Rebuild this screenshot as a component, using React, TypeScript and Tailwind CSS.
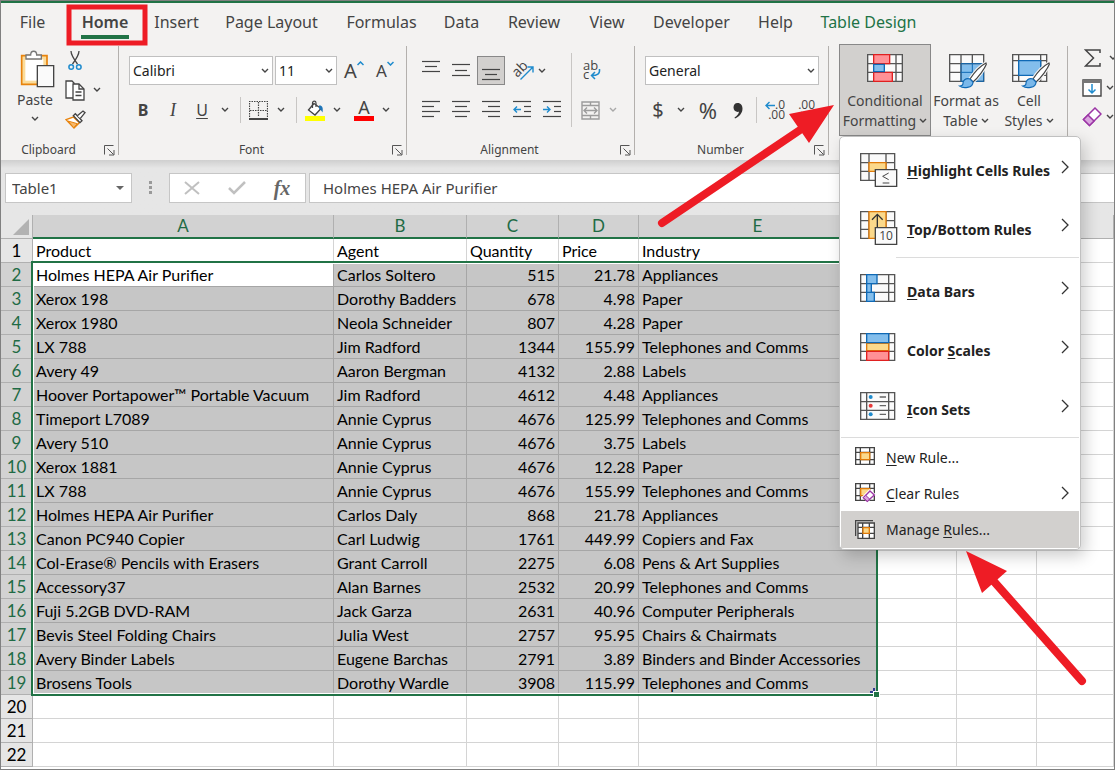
import type {ReactNode} from 'react'

const tabs = [
  {name: 'File', width: 'w-[63px]'},
  {name: 'Home', width: 'w-[82px]'},
  {name: 'Insert', width: 'w-[61px]'},
  {name: 'Page Layout', width: 'w-[129px]'},
  {name: 'Formulas', width: 'w-[91px]'},
  {name: 'Data', width: 'w-[69px]'},
  {name: 'Review', width: 'w-[76px]'},
  {name: 'View', width: 'w-[70px]'},
  {name: 'Developer', width: 'w-[99px]'},
  {name: 'Help', width: 'w-[69px]'},
  {name: 'Table Design', width: 'w-[117px]'},
]

const columns = ['A', 'B', 'C', 'D', 'E', 'F', 'G', 'H']

const rows = [
  ['Product', 'Agent', 'Quantity', 'Price', 'Industry'],
  ['Holmes HEPA Air Purifier', 'Carlos Soltero', '515', '21.78', 'Appliances'],
  ['Xerox 198', 'Dorothy Badders', '678', '4.98', 'Paper'],
  ['Xerox 1980', 'Neola Schneider', '807', '4.28', 'Paper'],
  ['LX 788', 'Jim Radford', '1344', '155.99', 'Telephones and Comms'],
  ['Avery 49', 'Aaron Bergman', '4132', '2.88', 'Labels'],
  ['Hoover Portapower™ Portable Vacuum', 'Jim Radford', '4612', '4.48', 'Appliances'],
  ['Timeport L7089', 'Annie Cyprus', '4676', '125.99', 'Telephones and Comms'],
  ['Avery 510', 'Annie Cyprus', '4676', '3.75', 'Labels'],
  ['Xerox 1881', 'Annie Cyprus', '4676', '12.28', 'Paper'],
  ['LX 788', 'Annie Cyprus', '4676', '155.99', 'Telephones and Comms'],
  ['Holmes HEPA Air Purifier', 'Carlos Daly', '868', '21.78', 'Appliances'],
  ['Canon PC940 Copier', 'Carl Ludwig', '1761', '449.99', 'Copiers and Fax'],
  ['Col-Erase® Pencils with Erasers', 'Grant Carroll', '2275', '6.08', 'Pens & Art Supplies'],
  ['Accessory37', 'Alan Barnes', '2532', '20.99', 'Telephones and Comms'],
  ['Fuji 5.2GB DVD-RAM', 'Jack Garza', '2631', '40.96', 'Computer Peripherals'],
  ['Bevis Steel Folding Chairs', 'Julia West', '2757', '95.95', 'Chairs & Chairmats'],
  ['Avery Binder Labels', 'Eugene Barchas', '2791', '3.89', 'Binders and Binder Accessories'],
  ['Brosens Tools', 'Dorothy Wardle', '3908', '115.99', 'Telephones and Comms'],
  [],
  [],
  [],
]

function Chevron({className = 'text-[#444]'}: {className?: string}) {
  return (
    <svg width="8" height="6" viewBox="0 0 8 6" className={`shrink-0 ${className}`} fill="none">
      <path d="M1 1l3 3 3-3" stroke="currentColor" strokeWidth="1.4" />
    </svg>
  )
}

function Tool({
  label,
  className,
  children,
}: {
  label: string
  className: string
  children: ReactNode
}) {
  return (
    <button
      type="button"
      aria-label={label}
      className={`flex h-full shrink-0 items-center justify-center ${className}`}
    >
      {children}
    </button>
  )
}

function Combo({label, value, className}: {label: string; value: string; className: string}) {
  return (
    <div className={`relative h-[29px] shrink-0 ${className}`}>
      <select
        aria-label={label}
        className="h-full w-full appearance-none border border-[#c0c0c0] bg-white pl-[3px] text-[14px] text-[#222]"
      >
        <option>{value}</option>
      </select>
      <span className="pointer-events-none absolute top-[12px] right-[4px]">
        <Chevron />
      </span>
    </div>
  )
}

function Divider({className}: {className: string}) {
  return <div className={`w-px shrink-0 bg-[#c8c6c4] ${className}`} />
}

function GroupDivider() {
  return <div className="mt-[2px] h-[109px] w-px shrink-0 bg-[#b3b0ad]" />
}

function Group({
  name,
  className,
  children,
}: {
  name: string
  className: string
  children: ReactNode
}) {
  return (
    <section className={`flex shrink-0 flex-col ${className}`}>
      {children}
      <footer className="mt-auto flex h-[20px] items-center pr-[3px]">
        <span className="flex-1 pr-[8px] text-center text-[12px] leading-[20px] text-[#444]">
          {name}
        </span>
        <button type="button" aria-label={`${name} settings`}>
          <svg width="11" height="11" viewBox="0 0 11 11" fill="none" stroke="#555">
            <path d="M.5 9.500V.5H9.500M3.500 3.500l6 6M10 5v5H5" />
          </svg>
        </button>
      </footer>
    </section>
  )
}

function Lines({lines, blueArrow}: {lines: number[][]; blueArrow?: 'left' | 'right'}) {
  return (
    <svg width="18" height="28" viewBox="0 0 18 28" fill="none">
      {lines.map(([x1, x2, y]) => (
        <path key={y} d={`M${x1} ${y}.5H${x2}`} stroke="#444" strokeWidth="1.2" />
      ))}
      {blueArrow === 'left' && (
        <path d="M8 13.500H1M4 10.500l-3 3 3 3" stroke="#1e8bcd" strokeWidth="1.4" />
      )}
      {blueArrow === 'right' && (
        <path d="M0 13.500h7M4 10.500l3 3-3 3" stroke="#1e8bcd" strokeWidth="1.4" />
      )}
    </svg>
  )
}

function PasteIcon() {
  return (
    <svg width="35" height="38" viewBox="0 0 105 114" fill="none">
      <path d="M5 17h76v86H5z" fill="#fbdc9b" stroke="#e8830c" strokeWidth="5" />
      <path d="M16 28h54v64H16z" fill="#fff" />
      <path
        d="M18 27V15h14C32 0 50 0 50 15h14v12z"
        fill="#fff"
        stroke="#777"
        strokeWidth="4"
      />
      <path d="M52 47h49v63H52z" fill="#fafafa" stroke="#444" strokeWidth="4" />
    </svg>
  )
}

function CutIcon() {
  return (
    <svg width="14" height="20" viewBox="0 0 14 20" fill="none">
      <path d="M3 0c0 4 2 7 6.500 13M11 0c0 4-2 7-6.500 13" stroke="#444" strokeWidth="1.3" />
      <circle cx="3.200" cy="16" r="2.300" stroke="#1e8bcd" strokeWidth="1.500" />
      <circle cx="10.800" cy="16" r="2.300" stroke="#1e8bcd" strokeWidth="1.500" />
    </svg>
  )
}

function CopyIcon() {
  return (
    <svg width="21" height="21" viewBox="0 0 21 21" fill="#fff" stroke="#444" strokeWidth="1.3">
      <path d="M1 1h6l2 2v15H1z" />
      <path d="M8 4h6l5 5v11H8z" />
      <path d="M14 4v5h5M10.500 12h6M10.500 15.500h6" fill="none" />
    </svg>
  )
}

function PainterIcon() {
  return (
    <svg width="21" height="19" viewBox="0 0 63 57" fill="none" strokeWidth="4">
      <path d="M3 29l22-8 18 17-16 16z" fill="#fff" stroke="#e8830c" />
      <path d="M9 33l28 8-11 12z" fill="#f7b96b" stroke="#e8830c" strokeWidth="3" />
      <path d="M25 17l6-6 20 21-6 6z" fill="#fff" stroke="#444" />
      <path d="M37 17L54 3l6 5-14 17" fill="#fff" stroke="#444" />
    </svg>
  )
}

function BordersIcon() {
  return (
    <svg width="19" height="19" viewBox="0 0 19 19" fill="none" stroke="#444">
      <path
        d="M.5 16V.5h18V16M9.500 1v15M1 9.500h17"
        strokeDasharray="1.500 1"
        strokeWidth="1.2"
      />
      <path d="M0 18h19" strokeWidth="2" />
    </svg>
  )
}

function FillIcon() {
  return (
    <svg width="20" height="21" viewBox="0 0 20 21" fill="none">
      <path d="M9 3.500l7 5-6 6.500-6.500-5z" fill="#fff" stroke="#444" strokeWidth="1.300" />
      <path d="M7.500 8V3c0-2.500 3.500-2.500 3.500 0v4" stroke="#444" strokeWidth="1.200" />
      <path d="M14 5.500c3-.5 4.500 2 3.500 7-1-2-2-3-3.500-4z" fill="#1e75b8" />
      <path d="M0 16h20v5H0z" fill="#ff0" />
    </svg>
  )
}

function OrientationIcon() {
  return (
    <svg width="20" height="20" viewBox="0 0 20 20" fill="none" className="overflow-visible">
      <text
        x="1"
        y="15"
        fontSize="14"
        fontFamily="Open Sans, sans-serif"
        fill="#444"
        transform="rotate(-45 5 12)"
      >
        ab
      </text>
      <path d="M7.500 18.500L20 6M14.500 6H20v5.500" stroke="#1e8bcd" strokeWidth="1.400" />
    </svg>
  )
}

function WrapIcon() {
  return (
    <svg width="18" height="21" viewBox="0 0 18 21" fill="none" className="overflow-visible">
      <text x="0" y="10" fontSize="13" fontFamily="Open Sans, sans-serif" fill="#444">
        ab
        <tspan x="0" y="19">
          c
        </tspan>
      </text>
      <path
        d="M16.500 9c.5 5-2 6.500-8 6.500M12 12l-3.500 3.500L12 19"
        stroke="#1e8bcd"
        strokeWidth="1.500"
      />
    </svg>
  )
}

function MergeIcon() {
  return (
    <svg width="19" height="19" viewBox="0 0 19 19" fill="none" stroke="#9c9c9c" strokeWidth="1.400">
      <path d="M1 1h17v17H1zM1 4.500h17M1 14.500h17M9.500 1v3.500M9.500 14.500V18" />
      <path d="M3 9.500h13M6 6.500l-3 3 3 3M13 6.500l3 3-3 3" />
    </svg>
  )
}

function DecimalIcon({top, bottom, left}: {top: string; bottom: string; left?: boolean}) {
  return (
    <svg width="20" height="20" viewBox="0 0 20 20" fill="none" className="overflow-visible">
      <g fontSize="12" fontFamily="Open Sans, sans-serif" textAnchor="end" fill="#444">
        <text x="20" y="9">
          {top}
        </text>
        <text x="20" y="19">
          {bottom}
        </text>
      </g>
      {left ? (
        <path d="M10 5.500H1M4.500 2L1 5.500 4.500 9" stroke="#1e8bcd" strokeWidth="1.400" />
      ) : (
        <path d="M1 15h8M6 12l3 3-3 3" stroke="#1e8bcd" strokeWidth="1.400" />
      )}
    </svg>
  )
}

function Brush() {
  return (
    <>
      <path
        d="M111 27C94 36 74 58 63 75l9 9C88 70 107 44 112 31z"
        fill="#fff"
        stroke="#f3f2f1"
        strokeWidth="10"
      />
      <path
        d="M111 27C94 36 74 58 63 75l9 9C88 70 107 44 112 31z"
        fill="#fff"
        stroke="#444"
        strokeWidth="3.500"
      />
      <path
        d="M63 75c-14-4-22 6-21 13 0 6-5 8-10 8 10 8 40 7 40-12z"
        fill="#7ab8ea"
        stroke="#0f69b5"
        strokeWidth="3.500"
      />
    </>
  )
}

function ConditionalIcon() {
  return (
    <svg width="36" height="28" viewBox="0 0 108 84" fill="none" strokeWidth="4">
      <path
        d="M2 2h104v80H2zM2 29h104M2 55h104M20 2v80M87 2v80"
        fill="#fafafa"
        stroke="#555"
      />
      <path d="M20 2h48v27H20zM20 55h56v27H20z" fill="#ff9196" stroke="#e02020" />
      <path d="M20 31h32v22H20z" fill="#83beec" stroke="#0f69b5" />
    </svg>
  )
}

function FormatTableIcon() {
  return (
    <svg width="38" height="35" viewBox="0 0 114 105" fill="none" strokeWidth="4">
      <path d="M2 2h102v80H2z" fill="#fafafa" />
      <path d="M36 29h68v53H36z" fill="#83beec" />
      <path d="M2 2h102v80H2zM2 29h102M2 55h34M36 2v80M70 2v27" stroke="#555" />
      <path d="M36 29h68v53H36zM36 55h68M70 29v53" stroke="#0f69b5" strokeWidth="3" />
      <Brush />
    </svg>
  )
}

function CellStylesIcon() {
  return (
    <svg width="38" height="35" viewBox="0 0 114 105" fill="none" strokeWidth="4">
      <path d="M2 2h102v80H2zM2 20h102M2 64h102M20 2v80M86 2v80" fill="#fafafa" stroke="#555" />
      <path d="M20 20h66v44H20z" fill="#83beec" stroke="#0f69b5" />
      <Brush />
    </svg>
  )
}

function EraserIcon() {
  return (
    <svg width="20" height="20" viewBox="0 0 20 20" fill="none" stroke="#9b35a5" strokeWidth="1.500">
      <path d="M13 1l6 6L7.500 18.500l-6-6z" fill="#fff" />
      <path d="M6 8l6 6-4.500 4.500-6-6z" fill="#d9a5de" />
    </svg>
  )
}

// Base 35x28 sheet that the large menu icons are drawn on
function Sheet({grid, children}: {grid: string; children: ReactNode}) {
  return (
    <svg width="38" height="36" viewBox="0 0 114 108" fill="none" strokeWidth="4">
      <path d="M2 2h102v80H2z" fill="#fafafa" stroke="#555" />
      <path d={grid} stroke="#555" strokeWidth="4" />
      {children}
    </svg>
  )
}

const wideGrid = 'M2 29h102M2 55h102M27 2v80M78 2v80'
const narrowGrid = 'M2 29h102M2 55h102M20 2v80M86 2v80'

const bigItems = [
  {
    label: ['', 'H', 'ighlight Cells Rules'],
    icon: (
      <Sheet grid={wideGrid}>
        <path d="M27 29h51v26H27z" fill="#fbd98b" stroke="#e07b0a" />
        <path d="M46 50h64v50H46z" fill="#fafafa" stroke="#444" />
        <path d="M86 60L68 70l18 10M68 90h20" stroke="#444" strokeWidth="3" />
      </Sheet>
    ),
  },
  {
    label: ['', 'T', 'op/Bottom Rules'],
    icon: (
      <Sheet grid={wideGrid}>
        <path d="M27 2h51v80H27z" fill="#fbd98b" stroke="#e07b0a" />
        <path d="M52 50V12M36 26l16-16 16 16" stroke="#333" strokeWidth="4" />
        <path d="M46 50h64v50H46z" fill="#fafafa" stroke="#444" />
        <text
          x="78"
          y="88"
          fontSize="36"
          fontWeight="400"
          fontFamily="Open Sans, sans-serif"
          textAnchor="middle"
          fill="#444"
        >
          10
        </text>
      </Sheet>
    ),
  },
  {
    label: ['', 'D', 'ata Bars'],
    icon: (
      <Sheet grid={narrowGrid}>
        <path d="M20 2h31v27H20zM20 29h14v26H20zM20 55h23v27H20z" fill="#83beec" stroke="#0f69b5" />
      </Sheet>
    ),
  },
  {
    label: ['Color ', 'S', 'cales'],
    icon: (
      <Sheet grid={narrowGrid}>
        <path d="M20 31h66v22H20z" fill="#fbd98b" stroke="#e07b0a" />
        <path d="M20 2h66v27H20z" fill="#83beec" stroke="#0f69b5" />
        <path d="M20 55h66v27H20z" fill="#ff9196" stroke="#e02020" />
      </Sheet>
    ),
  },
  {
    label: ['', 'I', 'con Sets'],
    icon: (
      <Sheet grid={narrowGrid}>
        <circle cx="32" cy="15" r="6" fill="#1e8bcd" />
        <circle cx="32" cy="41" r="6" fill="#e83a3a" />
        <circle cx="32" cy="67" r="6" fill="#1e8bcd" />
        <path d="M59 15h19M59 41h19M59 67h19" stroke="#666" />
      </Sheet>
    ),
  },
]

function SmallSheet() {
  return (
    <>
      <path d="M2 2h56v50H2zM2 16h56M2 38h56M16 2v50M44 2v50" fill="#fff" stroke="#444" strokeWidth="4" />
      <path d="M17 17h27v21H17z" fill="#fbd98b" stroke="#e07b0a" strokeWidth="4" />
    </>
  )
}

const smallItems = [
  {
    label: ['', 'N', 'ew Rule...'],
    icon: <SmallSheet />,
  },
  {
    label: ['', 'C', 'lear Rules'],
    icon: (
      <>
        <SmallSheet />
        <path d="M44 18l18 16-24 24-18-16z" fill="#fff" />
        <path d="M45 24l13 12-21 19-12-11z" fill="#fff" stroke="#9b35a5" strokeWidth="4" />
        <path d="M32 37l12 11-7 7-12-11z" fill="#d9a5de" stroke="#9b35a5" strokeWidth="3" />
      </>
    ),
  },
  {
    label: ['Manage ', 'R', 'ules...'],
    icon: (
      <>
        <path d="M2 48V2h52" stroke="#444" strokeWidth="4" />
        <path d="M5 48V5h49" stroke="#aaa" strokeWidth="3" />
        <path d="M9 9h49v46H9zM9 22h49M9 40h49M23 9v46M43 9v46" fill="#fff" stroke="#444" strokeWidth="4" />
        <path d="M24 23h19v17H24z" fill="#fbd98b" stroke="#e07b0a" strokeWidth="4" />
      </>
    ),
  },
]

function MenuLabel({parts}: {parts: string[]}) {
  return (
    <span className="flex-1 text-left whitespace-pre">
      {parts[0]}
      <span className="underline underline-offset-2">{parts[1]}</span>
      {parts[2]}
    </span>
  )
}

function SubmenuArrow() {
  return (
    <svg width="8" height="14" viewBox="0 0 8 14" fill="none">
      <path d="M1 1l6 6-6 6" stroke="#333" strokeWidth="1.300" />
    </svg>
  )
}

function RulesMenu() {
  return (
    <div
      role="menu"
      className="absolute top-[92px] left-0 z-10 w-[242px] rounded-[5px] border border-[#c0c0c0] bg-white px-px pt-[3px] pb-px text-[#222] shadow-[4px_6px_16px_rgba(0,0,0,0.2)]"
    >
      {bigItems.map(({label, icon}, i) => (
        <div key={label[1]}>
          <button
            type="button"
            role="menuitem"
            className={`flex w-full items-center pr-[10px] pl-[19px] text-[14px] font-bold ${
              i === 1 ? 'h-[58px]' : 'h-[59px]'
            }`}
          >
            <span className="w-[47px] pt-[2px]">{icon}</span>
            <span className="flex flex-1 pt-[2px]">
              <MenuLabel parts={label} />
            </span>
            <span className="pb-[6px]">
              <SubmenuArrow />
            </span>
          </button>
          {i === 1 && <hr className="mb-[3px] ml-[55px] border-[#dcdcdc]" />}
        </div>
      ))}
      <hr className="mt-[-1px] mb-px border-[#dcdcdc]" />
      {smallItems.map(({label, icon}, i) => (
        <button
          key={label[1]}
          type="button"
          role="menuitem"
          className={`flex w-full items-center pr-[10px] pl-[14px] text-[14px] ${
            i === 2 ? 'h-[37px] bg-[#d2d0ce]' : 'h-[36px]'
          }`}
        >
          <span className="w-[31px]">
            <svg width="21" height="20" viewBox="0 0 63 60" fill="none">
              {icon}
            </svg>
          </span>
          <MenuLabel parts={label} />
          {i === 1 && <SubmenuArrow />}
        </button>
      ))}
    </div>
  )
}

function LargeButton({
  icon,
  lines,
  className,
}: {
  icon: ReactNode
  lines: [string, string]
  className: string
}) {
  return (
    <button
      type="button"
      className={`flex h-[92px] shrink-0 flex-col items-center border text-[14px] leading-[20px] whitespace-nowrap text-[#444] ${className}`}
    >
      <span className="h-[46px] pt-[9px]">{icon}</span>
      <span>{lines[0]}</span>
      <span className="flex items-center gap-[3px]">
        {lines[1]}
        <Chevron />
      </span>
    </button>
  )
}

function Ribbon() {
  return (
    <div className="flex h-[116px] shrink-0">
      <Group name="Clipboard" className="w-[117px]">
        <div className="flex pl-[14px]">
          <button
            type="button"
            className="flex w-[40px] flex-col items-center pt-[6px] text-[14px] text-[#444]"
          >
            <span className="pl-[5px]">
              <PasteIcon />
            </span>
            <span className="mt-[2px] mb-[6px] leading-[20px]">Paste</span>
            <Chevron />
          </button>
          <div className="flex flex-col pt-[3px] pl-[5px]">
            <div className="h-[28px]">
              <Tool label="Cut" className="w-[30px]">
                <CutIcon />
              </Tool>
            </div>
            <div className="flex h-[30px]">
              <Tool label="Copy" className="w-[30px]">
                <CopyIcon />
              </Tool>
              <Tool label="Copy options" className="w-[14px]">
                <Chevron />
              </Tool>
            </div>
            <div className="h-[28px]">
              <Tool label="Format Painter" className="w-[30px]">
                <PainterIcon />
              </Tool>
            </div>
          </div>
        </div>
      </Group>
      <GroupDivider />

      <Group name="Font" className="w-[287px]">
        <div className="mt-[12px] flex h-[29px] pl-[10px]">
          <Combo label="Font name" value="Calibri" className="mr-[2px] w-[144px]" />
          <Combo label="Font size" value="11" className="w-[62px]" />
          <Tool label="Grow font" className="w-[34px] text-[20px] text-[#444]">
            A
            <svg width="7" height="5" viewBox="0 0 7 5" fill="none" className="mb-[14px]">
              <path d="M.5 4l3-3 3 3" stroke="#1e8bcd" strokeWidth="1.500" />
            </svg>
          </Tool>
          <Tool label="Shrink font" className="w-[28px] text-[17px] text-[#444]">
            A
            <svg width="7" height="5" viewBox="0 0 7 5" fill="none" className="mb-[14px]">
              <path d="M.5 1l3 3 3-3" stroke="#1e8bcd" strokeWidth="1.500" />
            </svg>
          </Tool>
        </div>
        <div className="mt-[12px] flex h-[26px] items-center pl-[9px] text-[16px] text-[#444]">
          <Tool label="Bold" className="w-[30px] font-bold">
            B
          </Tool>
          <Tool label="Italic" className="w-[30px] font-['Liberation_Serif',serif] text-[18px] italic">
            I
          </Tool>
          <Tool label="Underline" className="w-[28px] underline underline-offset-2">
            U
          </Tool>
          <Tool label="Underline options" className="w-[18px]">
            <Chevron />
          </Tool>
          <Divider className="ml-[6px] h-[26px]" />
          <Tool label="Borders" className="w-[34px]">
            <BordersIcon />
          </Tool>
          <Tool label="Border options" className="w-[12px]">
            <Chevron />
          </Tool>
          <Divider className="ml-[9px] h-[26px]" />
          <Tool label="Fill color" className="ml-[6px] w-[24px]">
            <FillIcon />
          </Tool>
          <Tool label="Fill options" className="w-[20px]">
            <Chevron />
          </Tool>
          <Tool label="Font color" className="ml-[3px] w-[28px]">
            <span className="w-[20px] border-b-5 border-[#f00] text-[18px] leading-[17px]">A</span>
          </Tool>
          <Tool label="Font color options" className="w-[16px]">
            <Chevron />
          </Tool>
        </div>
      </Group>
      <GroupDivider />

      <Group name="Alignment" className="w-[227px]">
        <div className="flex pl-[9px]">
          <div className="w-[155px] pt-[12px]">
            <div className="flex h-[29px]">
              <Tool label="Top align" className="w-[30px]">
                <Lines lines={[[0, 18, 4], [3, 15, 9], [0, 18, 14]]} />
              </Tool>
              <Tool label="Middle align" className="w-[30px]">
                <Lines lines={[[0, 18, 7], [3, 15, 13], [0, 18, 18]]} />
              </Tool>
              <Tool
                label="Bottom align"
                className="mx-px w-[28px] border border-[#888] bg-[#d2d0ce]"
              >
                <Lines lines={[[0, 18, 12], [3, 15, 17], [0, 18, 22]]} />
              </Tool>
              <Tool label="Orientation" className="w-[34px]">
                <OrientationIcon />
              </Tool>
              <Tool label="Orientation options" className="w-[4px]">
                <Chevron />
              </Tool>
            </div>
            <div className="mt-[12px] flex h-[26px]">
              <Tool label="Align left" className="w-[30px]">
                <Lines lines={[[0, 18, 5], [0, 12, 10], [0, 18, 15], [0, 12, 20]]} />
              </Tool>
              <Tool label="Center" className="w-[30px]">
                <Lines lines={[[0, 18, 5], [3, 15, 10], [0, 18, 15], [3, 15, 20]]} />
              </Tool>
              <Tool label="Align right" className="w-[30px]">
                <Lines lines={[[0, 18, 5], [6, 18, 10], [0, 18, 15], [6, 18, 20]]} />
              </Tool>
              <Tool label="Decrease indent" className="w-[31px]">
                <Lines
                  lines={[[0, 18, 5], [11, 18, 10], [11, 18, 15], [0, 18, 20]]}
                  blueArrow="left"
                />
              </Tool>
              <Tool label="Increase indent" className="w-[30px]">
                <Lines
                  lines={[[0, 18, 5], [11, 18, 10], [11, 18, 15], [0, 18, 20]]}
                  blueArrow="right"
                />
              </Tool>
            </div>
          </div>
          <Divider className="mt-[9px] h-[74px]" />
          <div className="pt-[12px]">
            <div className="flex h-[29px]">
              <Tool label="Wrap text" className="w-[40px]">
                <WrapIcon />
              </Tool>
            </div>
            <div className="mt-[12px] flex h-[26px]">
              <Tool label="Merge and center" className="w-[36px]">
                <MergeIcon />
              </Tool>
              <Tool label="Merge options" className="w-[10px]">
                <Chevron className="text-[#a8a8a8]" />
              </Tool>
            </div>
          </div>
        </div>
      </Group>
      <GroupDivider />

      <Group name="Number" className="w-[193px]">
        <div className="mt-[12px] h-[29px] pl-[10px]">
          <Combo label="Number format" value="General" className="w-[174px]" />
        </div>
        <div className="mt-[12px] flex h-[26px] items-center pl-[8px] text-[20px] text-[#444]">
          <Tool label="Currency" className="w-[30px]">
            $
          </Tool>
          <Tool label="Currency options" className="w-[16px]">
            <Chevron />
          </Tool>
          <Tool label="Percent" className="w-[38px] text-[22px]">
            %
          </Tool>
          <Tool label="Comma style" className="w-[22px]">
            <svg width="10" height="17" viewBox="0 0 10 17" fill="#333">
              <path d="M4.500 1C8 1 9.500 3.500 9.500 6.500 9.500 11 6.500 14.500 2 16.500l-.5-1C4 14 5.800 12 6 9.800 3 10.500.5 8.500.5 5.500.5 3 2 1 4.500 1z" />
            </svg>
          </Tool>
          <Divider className="ml-[7px] h-[26px]" />
          <Tool label="Increase decimal" className="ml-[7px] w-[22px]">
            <DecimalIcon top=".0" bottom=".00" left />
          </Tool>
          <Tool label="Decrease decimal" className="ml-[8px] w-[22px]">
            <DecimalIcon top=".00" bottom=".0" />
          </Tool>
        </div>
      </Group>
      <GroupDivider />

      <section aria-label="Styles" className="relative ml-[10px] flex w-[228px] shrink-0">
        <LargeButton
          icon={<ConditionalIcon />}
          lines={['Conditional', 'Formatting']}
          className="w-[92px] border-[#888] bg-[#d2d0ce]"
        />
        <LargeButton
          icon={
            <span className="block pl-[3px]">
              <FormatTableIcon />
            </span>
          }
          lines={['Format as', 'Table']}
          className="w-[70px] border-transparent"
        />
        <LargeButton
          icon={
            <span className="block pl-[3px]">
              <CellStylesIcon />
            </span>
          }
          lines={['Cell', 'Styles']}
          className="w-[56px] border-transparent"
        />
        <RulesMenu />
      </section>
      <GroupDivider />

      <section aria-label="Editing" className="flex-1 overflow-hidden pl-[12px]">
        <div className="flex h-[28px]">
          <Tool label="AutoSum" className="w-[24px]">
            <svg width="17" height="18" viewBox="0 0 17 18" fill="none">
              <path d="M16 4V1H1.500l8 8-8 8H16v-3" stroke="#444" strokeWidth="1.500" />
            </svg>
          </Tool>
          <Tool label="AutoSum options" className="ml-[5px] w-[8px]">
            <Chevron />
          </Tool>
        </div>
        <div className="flex h-[31px]">
          <Tool label="Fill" className="w-[24px]">
            <svg width="20" height="18" viewBox="0 0 20 18" fill="none">
              <path d="M1 1h18v16H1z" fill="#fff" stroke="#444" strokeWidth="1.400" />
              <path d="M1 2.500h18" stroke="#777" strokeWidth="3" />
              <path d="M10 5v9M6.500 10.500L10 14l3.500-3.500" stroke="#1e8bcd" strokeWidth="1.500" />
            </svg>
          </Tool>
          <Tool label="Fill options" className="ml-[2px] w-[8px]">
            <Chevron />
          </Tool>
        </div>
        <div className="flex h-[27px]">
          <Tool label="Clear" className="w-[24px]">
            <EraserIcon />
          </Tool>
          <Tool label="Clear options" className="ml-[2px] w-[8px]">
            <Chevron />
          </Tool>
        </div>
      </section>
    </div>
  )
}

function FormulaBar() {
  return (
    <div className="flex h-[55px] shrink-0 items-start bg-gradient-to-b from-[#cfcfcf] from-0% to-[#e6e6e6] to-15% pt-[13px] pl-[4px] text-[15px] text-[#444]">
      <div className="relative h-[30px] w-[127px]">
        <input
          aria-label="Name box"
          defaultValue="Table1"
          className="h-full w-full border border-[#c6c6c6] bg-white pl-[6px]"
        />
        <svg width="8" height="4" viewBox="0 0 8 4" className="absolute top-[13px] right-[8px]">
          <path d="M0 0h8L4 4z" fill="#666" />
        </svg>
      </div>
      <svg width="3" height="13" viewBox="0 0 3 13" fill="#999" className="mt-[8px] ml-[17px]">
        <path d="M0 0h3v3H0zM0 5h3v3H0zM0 10h3v3H0z" />
      </svg>
      <div className="ml-[17px] flex h-[30px] w-[137px] items-center border border-[#c6c6c6] bg-white">
        <Tool label="Cancel" className="w-[44px]">
          <svg width="16" height="14" viewBox="0 0 16 14" fill="none">
            <path d="M1 1l14 12M15 1L1 13" stroke="#c0c0c0" strokeWidth="2" />
          </svg>
        </Tool>
        <Tool label="Enter" className="w-[46px]">
          <svg width="18" height="14" viewBox="0 0 18 14" fill="none">
            <path d="M1 7l5 5L17 1" stroke="#c0c0c0" strokeWidth="2.500" />
          </svg>
        </Tool>
        <Tool
          label="Insert function"
          className="w-[44px] font-['Liberation_Serif',serif] text-[20px] font-bold text-[#666] italic"
        >
          fx
        </Tool>
      </div>
      <input
        aria-label="Formula"
        defaultValue="Holmes HEPA Air Purifier"
        className="ml-[3px] h-[30px] min-w-0 flex-1 border border-r-0 border-[#c6c6c6] bg-white pl-[13px]"
      />
    </div>
  )
}

function cellColor(row: number, col: number) {
  if (row === 0 || row > 18 || col > 4) return 'border-[#d4d4d4] bg-white'
  if (row === 1 && col === 0) return 'border-[#a6a6a6] bg-white'
  return 'border-[#a6a6a6] bg-[#c6c6c6]'
}

function Worksheet() {
  return (
    <div className="relative min-h-0 flex-1 overflow-hidden bg-white">
      <table className="w-full table-fixed border-separate border-spacing-0 font-['Lato','Noto_Sans',sans-serif] text-[16px] text-black">
        <colgroup>
          <col className="w-[32px]" />
          <col className="w-[301px]" />
          <col className="w-[133px]" />
          <col className="w-[92px]" />
          <col className="w-[80px]" />
          <col className="w-[238px]" />
          <col className="w-[80px]" />
          <col className="w-[80px]" />
          <col />
        </colgroup>
        <thead>
          <tr className="h-[24px]">
            <th className="border-r border-b border-[#b0b0b0] bg-[#e6e6e6] p-0 align-bottom">
              <svg width="16" height="16" viewBox="0 0 16 16" className="mb-[3px] ml-[12px]">
                <path d="M16 0v16H0z" fill="#b2b2b2" />
              </svg>
            </th>
            {columns.map((name, i) => (
              <th
                key={name}
                scope="col"
                className={`border-r p-0 text-[17px] leading-[22px] font-normal ${
                  i < 5
                    ? 'border-b-2 border-r-[#b0b0b0] border-b-[#217346] bg-[#d2d2d2] text-[#1f6b45]'
                    : 'border-b border-[#b0b0b0] bg-[#e6e6e6] text-[#1e6fc0]'
                }`}
              >
                {name}
              </th>
            ))}
          </tr>
        </thead>
        <tbody>
          {rows.map((row, r) => (
            <tr key={r} className="h-[24px]">
              <th
                scope="row"
                className={`border-r border-b border-[#b0b0b0] p-0 text-[17px] leading-[23px] font-normal ${
                  r > 0 && r < 19 ? 'bg-[#d2d2d2] text-[#1f6b45]' : 'bg-[#e6e6e6]'
                }`}
              >
                {r + 1}
              </th>
              {columns.map((name, c) => (
                <td
                  key={name}
                  className={`overflow-hidden border-r border-b px-[3px] py-0 leading-[23px] whitespace-nowrap ${
                    r > 0 && (c === 2 || c === 3) ? 'text-right' : 'text-left'
                  } ${cellColor(r, c)}`}
                >
                  {row[c]}
                </td>
              ))}
            </tr>
          ))}
        </tbody>
      </table>
      <div className="pointer-events-none absolute top-[46px] left-[30px] h-[435px] w-[847px] border-2 border-[#217346]">
        <div className="h-full border border-white border-r-transparent" />
        <svg width="5" height="5" viewBox="0 0 5 5" className="absolute right-px bottom-px">
          <path d="M3 0h2v5H0V3h3z" fill="#2f3b8f" />
        </svg>
        <div className="absolute -right-[4px] -bottom-[4px] h-[7px] w-[7px] border border-white bg-[#217346]" />
      </div>
    </div>
  )
}

function Annotations() {
  return (
    <svg
      width="1115"
      height="770"
      viewBox="0 0 1115 770"
      fill="none"
      className="pointer-events-none absolute -top-px -left-px z-20"
    >
      <rect x="69" y="7" width="76" height="36" stroke="#ee1c25" strokeWidth="5" />
      <path d="M662 223L800 130M1082 681L990 577" stroke="#ee1c25" strokeWidth="8" strokeLinecap="round" />
      <path d="M834 105l-45 9 20 29zM966 551l41 20-25 22z" fill="#ee1c25" />
    </svg>
  )
}

export default function App() {
  return (
    <div className="relative flex h-screen flex-col overflow-hidden border border-[#808080] bg-[#f3f2f1] font-['Noto_Sans',sans-serif]">
      <nav className="flex h-[43px] shrink-0 border-t-2 border-[#217346]">
        {tabs.map(({name, width}) => (
          <button
            key={name}
            type="button"
            className={`flex shrink-0 flex-col items-center pt-[7px] text-[16px] leading-[24px] whitespace-nowrap ${width} ${
              name === 'Table Design' ? 'text-[#217346]' : 'text-[#444]'
            } ${name === 'Home' ? 'font-semibold' : ''}`}
          >
            {name}
            {name === 'Home' && <span className="mt-px h-[4px] w-[48px] bg-[#217346]" />}
          </button>
        ))}
      </nav>
      <Ribbon />
      <FormulaBar />
      <Worksheet />
      <Annotations />
    </div>
  )
}
